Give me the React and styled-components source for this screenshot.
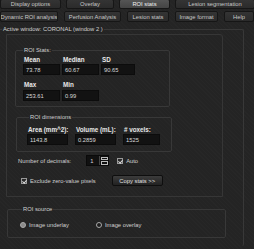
import React from "react";
import styled, { createGlobalStyle } from "styled-components";

const Global = createGlobalStyle`
	html, body {
		margin: 0;
		padding: 0;
		background: #232323;
	}
	body {
		font-family: "Liberation Sans", Arial, sans-serif;
		font-size: 6px;
		color: #d4d4d4;
	}
`;

const Page = styled.div`
	width: 254px;
	height: 249px;
	overflow: hidden;
	background-color: #242424;
	background-image: repeating-linear-gradient(45deg, rgba(255,255,255,0.012) 0 1px, transparent 1px 3px);
`;

const TabRow = styled.div`
	display: flex;
	gap: ${p => p.gap}px;
	height: ${p => p.h}px;
	margin-top: ${p => p.top || 0}px;
`;

const Tab = styled.div`
	flex: 0 0 ${p => p.w}px;
	min-width: 0;
	overflow: hidden;
	box-sizing: border-box;
	display: flex;
	align-items: center;
	justify-content: center;
	white-space: nowrap;
	font-size: 5.8px;
	color: ${p => (p.active ? "#f0f0f0" : "#c8c8c8")};
	background: ${p => (p.active ? "linear-gradient(#555, #444)" : "linear-gradient(#343434, #2b2b2b)")};
	border: 1px solid #161616;
	border-radius: 2px;
`;

const Group = styled.fieldset`
	margin: ${p => p.m || "0"};
	padding: ${p => p.pad || "0"};
	border: 1px solid #383838;
	border-radius: 2px;
	min-width: 0;
	box-sizing: border-box;
	width: ${p => (p.w ? `${p.w}px` : "auto")};
	${p => p.noLeft && "border-left: none; border-bottom: none;"}
`;

const Legend = styled.legend`
	padding: 0 1px;
	margin-left: ${p => p.ml || 0}px;
	font-size: 5.8px;
	color: #d0d0d0;
	line-height: 8px;
`;

const Inner = styled.div`
	margin: 1px 0 0 8px;
	width: 217px;
	height: 163px;
	box-sizing: border-box;
	border: 1px solid #363636;
	border-radius: 0 3px 0 0;
	display: flex;
	flex-direction: column;
`;

const StatGrid = styled.div`
	display: grid;
	grid-template-columns: ${p => p.cols};
	column-gap: ${p => p.gap}px;
	row-gap: 0;
`;

const Label = styled.div`
	font-weight: bold;
	font-size: 6.3px;
	color: #e8e8e8;
	height: ${p => p.h || 9}px;
	display: flex;
	align-items: ${p => (p.end ? "flex-end" : "center")};
	padding-bottom: ${p => (p.end ? 2 : 0)}px;
	box-sizing: border-box;
	padding-left: 1px;
	white-space: nowrap;
`;

const Field = styled.div`
	height: 11px;
	box-sizing: border-box;
	background: #121212;
	border: 1px solid #0c0c0c;
	font-size: 5.8px;
	color: #d8d8d8;
	display: flex;
	align-items: center;
	padding-left: 2px;
`;

const Row = styled.div`
	display: flex;
	align-items: center;
	margin: ${p => p.m};
	white-space: nowrap;
`;

const Text = styled.span`
	font-size: 5.8px;
	color: #d0d0d0;
	margin-left: ${p => p.ml || 0}px;
`;

const Spin = styled.div`
	display: flex;
	width: 23px;
	height: 11px;
	box-sizing: border-box;
	background: #111;
	border: 1px solid #0a0a0a;
	margin-left: ${p => p.ml}px;
`;

const SpinValue = styled.div`
	flex: 1;
	font-size: 5.8px;
	padding-left: 3px;
	display: flex;
	align-items: center;
`;

const SpinArrows = styled.div`
	width: 8px;
	display: flex;
	flex-direction: column;
	border-left: 1px solid #444;
	div {
		flex: 1;
		border: 1px solid #bbb;
		margin: 0.5px;
	}
`;

const Check = styled.span`
	width: 6px;
	height: 6px;
	box-sizing: border-box;
	border: 1px solid #999;
	background: #2a2a2a;
	margin-left: ${p => p.ml || 0}px;
	position: relative;
	display: inline-block;
	&::after {
		content: "";
		position: absolute;
		left: 1px;
		top: 0px;
		width: 1.5px;
		height: 3px;
		border: solid #ddd;
		border-width: 0 1px 1px 0;
		transform: rotate(40deg);
	}
`;

const Button = styled.div`
	width: 51px;
	height: 11px;
	box-sizing: border-box;
	margin-left: ${p => p.ml}px;
	background: linear-gradient(#3c3c3c, #222);
	border: 1px solid #0e0e0e;
	border-radius: 2px;
	display: flex;
	align-items: center;
	justify-content: center;
	font-size: 5.8px;
	color: #e0e0e0;
`;

const Radio = styled.span`
	width: 6px;
	height: 6px;
	box-sizing: border-box;
	border-radius: 50%;
	border: 1px solid #aaa;
	background: ${p => (p.on ? "#8a8a8a" : "#1e1e1e")};
	margin-left: ${p => p.ml || 0}px;
	display: inline-block;
`;

export default function App() {
	return (
		<Page>
			<Global />
			<TabRow gap={5} h={10} top={-1}>
				<Tab w={61}>Display options</Tab>
				<Tab w={48}>Overlay</Tab>
				<Tab w={51} active>ROI stats</Tab>
				<Tab w={80}>Lesion segmentation</Tab>
			</TabRow>
			<TabRow gap={6} h={11} top={2}>
				<Tab w={58}>Dynamic ROI analysis</Tab>
				<Tab w={57}>Perfusion Analysis</Tab>
				<Tab w={42}>Lesion stats</Tab>
				<Tab w={43}>Image format</Tab>
				<Tab w={30}>Help</Tab>
			</TabRow>
			<Group m="3px 10px 0 -2px" noLeft>
				<Legend ml={4}>Active window: CORONAL (window 2 )</Legend>
				<Inner>
					<Group m="11px 0 0 8px" w={155} pad="1px 0 5px 7px">
						<Legend>ROI Stats:</Legend>
						<StatGrid cols="37px 37px 34px" gap={2}>
							<Label>Mean</Label>
							<Label>Median</Label>
							<Label>SD</Label>
							<Field>73.78</Field>
							<Field>60.67</Field>
							<Field>90.65</Field>
							<Label h={15} end>Max</Label>
							<Label h={15} end>Min</Label>
							<div />
							<Field>253.61</Field>
							<Field>0.99</Field>
						</StatGrid>
					</Group>
					<Group m="6px 0 0 9px" w={156} pad="3px 0 6px 10px">
						<Legend ml={2}>ROI dimensions</Legend>
						<StatGrid cols="41px 41px 37px" gap={7}>
							<Label h={10}>Area (mm^2):</Label>
							<Label h={10}>Volume (mL):</Label>
							<Label h={10}># voxels:</Label>
							<Field>1143.8</Field>
							<Field>0.2859</Field>
							<Field>1525</Field>
						</StatGrid>
					</Group>
					<Row m="3px 0 0 11px">
						<Text>Number of decimals:</Text>
						<Spin ml={15}>
							<SpinValue>1</SpinValue>
							<SpinArrows><div /><div /></SpinArrows>
						</Spin>
						<Check ml={8} />
						<Text ml={3}>Auto</Text>
					</Row>
					<Row m="9px 0 0 14px">
						<Check />
						<Text ml={3}>Exclude zero-value pixels</Text>
						<Button ml={16}>Copy stats &gt;&gt;</Button>
					</Row>
				</Inner>
				<Group m="8px 0 8px 9px" w={219} pad="7px 0 9px 12px">
					<Legend ml={2}>ROI source</Legend>
					<Row m="2px 0 0 0">
						<Radio on />
						<Text ml={3}>Image underlay</Text>
						<Radio ml={27} />
						<Text ml={3}>Image overlay</Text>
					</Row>
				</Group>
			</Group>
		</Page>
	);
}
